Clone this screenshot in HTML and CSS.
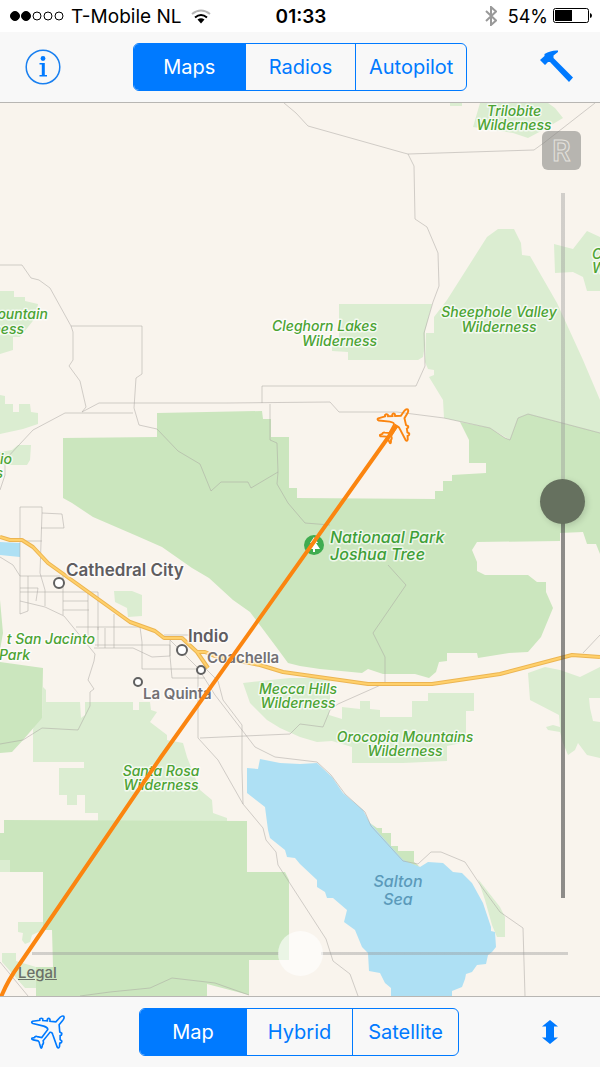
FILE: index.html
```html
<!DOCTYPE html>
<html lang="en">
<head>
    <meta charset="UTF-8">
    <meta name="viewport" content="width=device-width, initial-scale=1.0">
    <title>Maps</title>
    <link rel="stylesheet" href="styles.css">
</head>
<body>
    <!-- Shared airplane outline -->
    <svg class="defs" aria-hidden="true">
        <symbol id="plane" viewBox="96 68 110 110" overflow="visible">
            <path d="M199 75 Q194 72 188 78 L175 92 L157 90 L157 84 Q153 79 149 84 L149 89 L135 88 L135 83 Q131 79 126 83 L126 87 L104 90 Q98 93 105 97 L138 105 Q152 110 150 116 L132 140 L118 137 Q111 135 110 140 L102 142 Q100 146 106 147 L121 150 Q124 152 125 158 L129 171 Q132 174 133 168 L134 162 Q139 158 136 150 L157 124 Q163 122 166 132 L179 169 Q183 175 186 168 L187 157 Q194 156 193 150 L188 146 L188 134 Q194 133 193 127 L187 123 L185 101 L197 86 Q202 79 199 75 Z"/>
        </symbol>
    </svg>

    <header class="status-bar">
        <div class="carrier">
            <svg class="signal" viewBox="0 0 54 10" aria-hidden="true">
                <circle cx="5" cy="5" r="4.5" fill="#000"/>
                <circle cx="16" cy="5" r="4.5" fill="#000"/>
                <circle cx="27" cy="5" r="4"/>
                <circle cx="38" cy="5" r="4"/>
                <circle cx="49" cy="5" r="4"/>
            </svg>
            <span>T-Mobile NL</span>
            <svg class="wifi" viewBox="0 0 20 15" aria-hidden="true">
                <path d="M1 5 Q10 -2 19 5" stroke="#b5b5b5"/>
                <path d="M4 8.5 Q10 3.500 16 8.500" stroke="#000"/>
                <path d="M6.500 10.500 Q10 8 13.500 10.500 L10 14.500 Z" fill="#000"/>
            </svg>
        </div>
        <time class="clock">01:33</time>
        <div class="battery">
            <svg class="bluetooth" viewBox="0 0 12 20" aria-hidden="true">
                <path d="M1 5 L11 14.500 L6 19 L6 1 L11 5.500 L1 15"/>
            </svg>
            <span>54%</span>
            <svg class="cell" viewBox="0 0 39 16" aria-hidden="true">
                <rect x="0.500" y="0.500" width="35" height="14" rx="2" fill="#fff" stroke="#000"/>
                <rect x="2" y="2" width="17" height="11" fill="#000"/>
                <path d="M37 5 Q39 5.500 39 7.500 Q39 9.500 37 10 Z" fill="#000"/>
            </svg>
        </div>
    </header>

    <nav class="bar top-bar">
        <button type="button" class="icon-button" aria-label="Info">
            <svg class="info" viewBox="0 0 36 36">
                <circle cx="18" cy="18" r="16.800" fill="none" stroke="#1a80f0" stroke-width="1.500"/>
                <circle cx="18" cy="9.500" r="2.400"/>
                <path d="M14.500 14 H19.800 V26 H22 V27.500 H14.500 V26 H16.800 V15.500 H14.500 Z"/>
            </svg>
        </button>
        <div class="segmented wide" role="radiogroup" aria-label="View">
            <input type="radio" name="view" id="view-maps" checked>
            <label for="view-maps">Maps</label>
            <input type="radio" name="view" id="view-radios">
            <label for="view-radios">Radios</label>
            <input type="radio" name="view" id="view-autopilot">
            <label for="view-autopilot">Autopilot</label>
        </div>
        <button type="button" class="icon-button" aria-label="Tools">
            <svg class="hammer" viewBox="0 0 34 34">
                <path d="M0 10 L4.500 6 L4.500 4 Q11 0 18 0.500 L18 2 L13.500 5.500 L13.500 8 L33 27.500 L29 32 L10 12 L8 12 L5 15 Z"/>
            </svg>
        </button>
    </nav>

    <main class="map">
        <svg class="map-canvas" viewBox="0 103 600 893" preserveAspectRatio="xMidYMid slice" role="img" aria-label="Map of the Joshua Tree area">
            <!-- Wilderness areas -->
            <g class="wilderness">
                <path d="M480 103 L473 127 L500 131 L513 133 L528 138 L543 130 L563 118 L555 108 L548 103 Z M450 103 H462 V106 H450 Z"/>
                <path d="M498 229 L514 229 L521 243 L522 255 L530 256 L557 303 L583 360 L600 400 V433 L528 414 L518 418 L510 440 L490 428 L444 418 L443 400 L429 377 L434 375 V370 L428 369 L425 362 L426 333 H434 V317 L447 300 L487 237 Z"/>
                <path d="M339 304 H432 L425 331 V345 L423 357 L418 360 H348 V352 L332 351 V342 H339 Z"/>
                <path d="M554 244 L573 249 L587 231 L600 237 V291 H587 L583 277 L573 272 L555 273 Z"/>
                <path d="M0 291 H14 V297 H25 V301 L38 304 L36 317 L20 337 H13 V350 L0 354 Z"/>
                <path d="M0 395 L5 396 V404 H13 V412 H19 V404 H30 L31 412 L38 413 V424 L23 429 L0 434 Z M12 450 L18 445 H31 L30 460 L27 465 H0 V452 Z"/>
                <path d="M43 687 L46 690 V702 H80 L81 718 L85 715 V702 H133 V710 H139 V702 H150 L151 710 L157 712 L150 722 L167 735 V740 L183 743 L187 757 L200 790 L212 800 L213 813 L227 818 V821 H98 V813 H85 V795 H77 V805 H67 V795 H59 V768 H84 V762 H33 V730 L35 720 L42 718 Z"/>
                <path d="M0 860 H10 V872 H0 Z M18 922 H43 V930 L32 935 L30 942 L25 944 L22 940 L23 933 L18 932 Z M2 953 H16 V961 L36 967 H53 V988 H25 L2 962 Z"/>
                <path d="M243 683 L290 678 H330 V704 L329 715 L342 719 V707 L360 709 V701 H370 V709 L380 710 V717 H412 V701 H428 V693 H474 V711 H466 V742 L447 746 V761 L403 763 H352 V747 L332 741 L317 742 L300 737 L280 728 L267 720 L250 703 Z"/>
                <path d="M528 673 L545 667 L560 670 L580 677 L600 667 V698 H589 L590 708 L593 721 L600 722 V758 L587 755 L578 743 L575 750 L568 755 L563 743 L560 732 L548 730 L546 727 L553 725 L560 727 L559 715 L530 700 Z"/>
                <path d="M114 591 H132 L142 595 V616 L128 617 L127 608 L115 602 Z"/>
                <path d="M478 879 L500 907 L505 917 V937 H497 L492 925 L485 900 Z"/>
            </g>
            <!-- Parks -->
            <g class="park">
                <path d="M63 438 L157 437 V413 L262 411 L263 419 H271 V437 H289 V488 H297 V498 L435 499 V491 H443 V481 H452 V475 L486 473 V463 H469 V440 L460 422 L490 428 L505 438 L510 440 L518 418 L528 414 L600 433 V554 L596 544 H587 L583 532 L560 533 V541 L477 542 L472 550 L477 562 V571 L485 575 H528 L537 582 H546 V592 L553 608 L541 637 L528 652 L509 653 L478 658 L477 653 H447 V661 L439 662 L436 672 L429 678 L415 674 H383 L368 669 L362 673 L320 669 L300 666 L288 663 L277 648 L250 612 L233 600 L209 578 L192 568 L162 547 L137 536 L93 517 L72 503 L63 498 Z"/>
                <path d="M0 662 L43 668 L42 718 L23 740 L12 752 L0 753 Z M0 600 L3 633 L0 650 Z"/>
                <path d="M4 820 L247 821 V872 H285 L289 880 V960 H249 V995 L207 984 V996 H36 V967 H53 L52 930 H43 V872 H10 V860 H0 V833 H4 Z"/>
                <path d="M370 823 L377 828 H382 V833 H391 V846 H398 V851 H414 V862 L420 867 L403 862 Z"/>
            </g>
            <!-- Water -->
            <g class="water">
                <path d="M0 542 L20 543 V557 L0 555 Z"/>
                <path d="M247 768 L258 769 L260 759 L280 763 L300 764 L317 763 L332 777 L343 793 L363 810 L370 823 L386 841 L403 860 L420 867 L428 862 L443 863 L453 872 L462 873 L472 883 L483 903 L491 927 V931 L495 932 L496 947 L492 952 L488 955 L486 964 L477 965 L472 972 L466 974 L465 979 L462 987 L452 991 V996 H391 V988 L385 983 L380 973 L369 971 L368 953 L362 947 L355 930 L344 922 L347 910 L333 898 L327 898 L325 892 L317 887 V880 L300 864 L295 858 L287 857 L285 850 L270 838 L268 830 L265 807 L247 793 Z"/>
            </g>
            <!-- Minor roads -->
            <g class="roads">
                <path d="M284 103 L296 113 L308 126 L404 153 L408 154 L534 150 L545 142 L595 103"/>
                <path d="M408 154 L414 166 L415 219 L427 227 L438 253 L439 286 L433 302 L424 333 L425 366 L416 386 H262 V403"/>
                <path d="M0 265 H22 L31 278 L39 280 L50 288 L71 326 L73 332 V360 L69 366 L80 381 L86 407 L82 412"/>
                <path d="M71 326 H142 V374 L136 378 L134 408 L139 425 L157 429 L178 451 L200 464 L211 491 L221 482 H248 L251 488 L278 472"/>
                <path d="M270 404 V440 L277 443 L278 472 L277 484 L288 503 L305 523 L330 525"/>
                <path d="M0 490 L5 475 V460 L33 430 L65 413 H133 M82 412 L99 403 H227 L330 402 L339 412 H397 L444 418 L490 428 L505 438 L510 440 L518 418 L528 414 L600 433"/>
                <path d="M20 507 V614 L28 611 V576 M20 507 H42 V513 L62 514 L64 528 H41 M42 513 L40 573 L45 590 V606 M20 541 H42 M0 557 L13 565 L20 576 H60 M20 588 H38 L36 601 M20 592 H98 V630 M20 601 L45 607 L64 616 L95 654 L94 661 L88 680 L94 689 L90 692 V706 L78 730 L42 728 L23 740 L0 744"/>
                <path d="M63 575 V615 M63 601 H88 M63 610 H89 M88 592 V637 M76 627 H140 L142 642 V669 H204 M98 627 V647 M105 628 V648 M114 614 V648 M95 645 H170 V656 L152 657 L133 648 H94"/>
                <path d="M164 635 H190 M170 638 V656 L172 678 H205 M198 672 V738 L218 760 L243 804 L263 828 L266 840 L276 852 L278 865 L302 902 L326 939 L333 961 L350 974 L358 996"/>
                <path d="M170 640 L198 668 L215 695 L242 730 L255 747 L275 757 L317 762 L331 775"/>
                <path d="M205 668 L218 681 L223 700 L242 725 V770 L243 804 M200 738 L290 734 L300 724 L323 727 L330 710 L338 704 L383 684"/>
                <path d="M388 565 L406 585 L373 633 L385 657 V684 M583 653 L600 635 M331 775 L345 794 L365 812 L371 826 L403 861 L418 864 L431 852 H441 L465 862 L481 886 L500 912 L523 928 L525 996"/>
                <path d="M80 996 L110 992 L150 988 L172 978 L215 983 L249 995 M0 962 L28 996"/>
            </g>
            <!-- Highway -->
            <g class="highway">
                <path id="i10" d="M0 537 L10 540 H22 L33 547 L48 563 L130 622 L155 631 L164 638 H182 L197 652 L208 668 M197 652 H205 L217 657 L260 665 L283 672 L368 684 H432 L500 674 L572 655 L600 657"/>
            </g>
            <use class="highway-core" href="#i10"/>
            <!-- Place markers -->
            <g class="dots">
                <circle cx="59" cy="583" r="5"/>
                <circle cx="182" cy="650" r="5"/>
                <circle cx="201" cy="670" r="4"/>
                <circle cx="138" cy="682" r="4"/>
            </g>
            <circle cx="314" cy="545" r="10" fill="#3fac50"/>
            <path d="M314 537 L318 543 H316 L320 549 H315 V552 H313 V549 H308 L312 543 H310 Z" fill="#fff"/>
            <!-- Labels -->
            <g class="label city">
                <text x="66" y="576">Cathedral City</text>
                <text x="188" y="642">Indio</text>
                <text class="small" x="207" y="663">Coachella</text>
                <text class="small" x="143" y="699">La Quinta</text>
            </g>
            <g class="label area">
                <text text-anchor="middle" x="514" y="116">Trilobite</text>
                <text text-anchor="middle" x="514" y="130">Wilderness</text>
                <text text-anchor="end" x="377" y="331">Cleghorn Lakes</text>
                <text text-anchor="end" x="377" y="346">Wilderness</text>
                <text text-anchor="middle" x="499" y="317">Sheephole Valley</text>
                <text text-anchor="middle" x="499" y="332">Wilderness</text>
                <text x="592" y="259">C</text>
                <text x="592" y="273">W</text>
                <text text-anchor="end" x="48" y="319">ountain</text>
                <text text-anchor="end" x="24" y="334">ness</text>
                <text text-anchor="end" x="12" y="464">io</text>
                <text text-anchor="end" x="3" y="478">s</text>
                <text text-anchor="end" x="95" y="644">t San Jacinto</text>
                <text text-anchor="end" x="30" y="660">Park</text>
                <text text-anchor="middle" x="298" y="694">Mecca Hills</text>
                <text text-anchor="middle" x="298" y="708">Wilderness</text>
                <text text-anchor="middle" x="405" y="742">Orocopia Mountains</text>
                <text text-anchor="middle" x="405" y="756">Wilderness</text>
                <text text-anchor="middle" x="161" y="776">Santa Rosa</text>
                <text text-anchor="middle" x="161" y="790">Wilderness</text>
            </g>
            <g class="label national">
                <text x="330" y="543">Nationaal Park</text>
                <text x="330" y="560">Joshua Tree</text>
            </g>
            <g class="sea">
                <text text-anchor="middle" x="398" y="887">Salton</text>
                <text text-anchor="middle" x="398" y="905">Sea</text>
            </g>
            <!-- Flight track and aircraft -->
            <path class="track" d="M397 425 L161 757 L19 965 Q8 980 1 997"/>
            <g class="aircraft" transform="translate(408 409) rotate(-8) scale(0.320) translate(-200 -74)">
                <use href="#plane" x="96" y="68" width="110" height="110"/>
            </g>
        </svg>

        <a class="legal" href="#legal">Legal</a>
        <button type="button" class="rotate" aria-label="Reset">R</button>
        <input class="slider slider-vertical" type="range" min="0" max="1000" value="433" aria-label="Altitude">
        <input class="slider slider-horizontal" type="range" min="0" max="1000" value="500" aria-label="Heading">
    </main>

    <footer class="bar bottom-bar">
        <button type="button" class="icon-button" aria-label="Aircraft">
            <svg class="plane-icon"><use href="#plane"/></svg>
        </button>
        <div class="segmented" role="radiogroup" aria-label="Map type">
            <input type="radio" name="type" id="type-map" checked>
            <label for="type-map">Map</label>
            <input type="radio" name="type" id="type-hybrid">
            <label for="type-hybrid">Hybrid</label>
            <input type="radio" name="type" id="type-satellite">
            <label for="type-satellite">Satellite</label>
        </div>
        <button type="button" class="icon-button" aria-label="Fit height">
            <svg class="resize" viewBox="0 0 16 24">
                <path d="M8 0 L16 6.500 H12 V17.500 H16 L8 24 L0 17.500 H4 V6.500 H0 Z"/>
            </svg>
        </button>
    </footer>
</body>
</html>
```
FILE: styles.css
```css
:root {
    --blue: #007aff;
    --bar: #f8f8f8;
    --line: #b8b6b3;
    --ground: #f9f4ed;
    --orange: #fb8510;
}

* {
    box-sizing: border-box;
}

body {
    margin: 0;
    height: 100vh;
    display: flex;
    flex-direction: column;
    font-family: Inter, "Liberation Sans", sans-serif;
    background: var(--bar);
    overflow: hidden;
}

.defs {
    position: absolute;
    width: 0;
    height: 0;
}

/* Status bar */
.status-bar {
    display: grid;
    grid-template-columns: 1fr auto 1fr;
    align-items: center;
    height: 32px;
    padding: 0 8px 0 10px;
    background: #fff;
    font-size: 19px;
}

.carrier,
.battery {
    display: flex;
    align-items: center;
    gap: 7px;
}

.battery {
    justify-content: flex-end;
    gap: 5px;
    font-size: 18px;
}

.clock {
    font-weight: 600;
}

.signal {
    width: 54px;
    height: 10px;
    fill: none;
    stroke: #000;
}

.wifi {
    width: 20px;
    height: 15px;
    margin-left: 3px;
    fill: none;
    stroke-width: 2;
}

.bluetooth {
    width: 12px;
    height: 20px;
    margin-right: 6px;
    fill: none;
    stroke: #999;
    stroke-width: 2;
}

.cell {
    width: 39px;
    height: 16px;
}

/* Toolbars */
.bar {
    display: flex;
    justify-content: space-between;
    align-items: center;
    height: 71px;
    padding: 0 24px;
    background: var(--bar);
}

.top-bar {
    border-bottom: 1px solid var(--line);
}

.bottom-bar {
    padding: 0 26px 0 24px;
    border-top: 1px solid var(--line);
}

.icon-button {
    display: flex;
    justify-content: center;
    align-items: center;
    width: 48px;
    height: 48px;
    padding: 0;
    border: none;
    background: none;
    cursor: pointer;
}

.top-bar .icon-button {
    width: 38px;
}

.icon-button svg {
    fill: var(--blue);
}

.info {
    width: 36px;
    height: 36px;
}

.hammer {
    width: 34px;
    height: 34px;
    flex: none;
}

.icon-button .plane-icon {
    width: 36px;
    height: 36px;
    fill: none;
    stroke: var(--blue);
    stroke-width: 5;
}

.resize {
    width: 16px;
    height: 24px;
}

.segmented {
    display: grid;
    grid-template-columns: repeat(3, 1fr);
    width: 320px;
    height: 48px;
    border: 1px solid var(--blue);
    border-radius: 6px;
    overflow: hidden;
}

.segmented.wide {
    width: 334px;
}

.segmented input {
    position: absolute;
    opacity: 0;
}

.segmented label {
    display: flex;
    justify-content: center;
    align-items: center;
    color: var(--blue);
    font-size: 20px;
    cursor: pointer;
}

.segmented label + input + label {
    border-left: 1px solid var(--blue);
}

.segmented input:checked + label {
    background: var(--blue);
    color: #fff;
}

/* Map */
.map {
    position: relative;
    flex: 1;
    min-height: 0;
    background: var(--ground);
    overflow: hidden;
}

.map-canvas {
    display: block;
    width: 100%;
    height: 100%;
}

.wilderness {
    fill: #dbedd1;
}

.park {
    fill: #cbe6be;
}

.water {
    fill: #aee0f4;
}

.roads {
    fill: none;
    stroke: #a8a4a0;
    stroke-opacity: 0.5;
}

.highway,
.highway-core {
    fill: none;
    stroke-linejoin: round;
}

.highway {
    stroke: #ecb552;
    stroke-width: 4;
}

.highway-core {
    stroke: #ffd06b;
    stroke-width: 2;
}

.dots {
    fill: #fff;
    stroke: #606060;
    stroke-width: 2;
}

.label {
    stroke: #fff;
    stroke-width: 3;
    stroke-opacity: 0.7;
    stroke-linejoin: round;
    paint-order: stroke;
}

.city {
    font-size: 17px;
    font-weight: 600;
    fill: #5f5d60;
}

.city .small {
    font-size: 15px;
    fill: #737174;
}

.area {
    font-size: 14px;
    font-style: italic;
    font-weight: 500;
    fill: #4ba333;
}

.national {
    font-size: 16px;
    font-style: italic;
    font-weight: 500;
    fill: #3f9f38;
}

.sea {
    font-size: 16px;
    font-style: italic;
    font-weight: 500;
    fill: #5b9aba;
}

.track {
    fill: none;
    stroke: var(--orange);
    stroke-width: 4;
}

.aircraft {
    fill: none;
    stroke: var(--orange);
    stroke-width: 6;
}

/* Map overlays */
.legal {
    position: absolute;
    left: 18px;
    bottom: 14px;
    color: #6b7068;
    font-size: 15px;
    font-weight: 500;
}

.rotate {
    position: absolute;
    top: 28px;
    right: 19px;
    width: 39px;
    height: 39px;
    padding: 0;
    border: none;
    border-radius: 6px;
    background: rgba(130, 130, 125, 0.55);
    color: transparent;
    font-family: inherit;
    font-size: 28px;
    font-weight: 600;
    -webkit-text-stroke: 1px #e4e2dd;
    cursor: pointer;
}

.slider {
    position: absolute;
    margin: 0;
    appearance: none;
    background: none;
}

.slider::-webkit-slider-runnable-track {
    background: rgba(150, 150, 150, 0.4);
}

.slider::-webkit-slider-thumb {
    appearance: none;
    width: 45px;
    height: 45px;
    border-radius: 50%;
}

.slider-vertical {
    writing-mode: vertical-lr;
    top: 90px;
    bottom: 98px;
    right: 15px;
    width: 45px;
}

.slider-vertical::-webkit-slider-runnable-track {
    width: 4px;
    background: linear-gradient(rgba(150, 150, 150, 0.4) 44%, rgba(70, 70, 70, 0.6) 44%);
}

.slider-vertical::-webkit-slider-thumb {
    margin-left: -21px;
    background: #66715f;
    box-shadow: 2px 2px 6px rgba(0, 0, 0, 0.15);
}

.slider-horizontal {
    left: 32px;
    right: 32px;
    bottom: 20px;
    width: calc(100% - 64px);
    height: 45px;
}

.slider-horizontal::-webkit-slider-runnable-track {
    height: 3px;
    background: linear-gradient(90deg, rgba(150, 150, 150, 0.4) 46%, transparent 46%, transparent 54%, rgba(150, 150, 150, 0.4) 54%);
}

.slider-horizontal::-webkit-slider-thumb {
    margin-top: -21px;
    background: rgba(255, 255, 255, 0.6);
}
```
